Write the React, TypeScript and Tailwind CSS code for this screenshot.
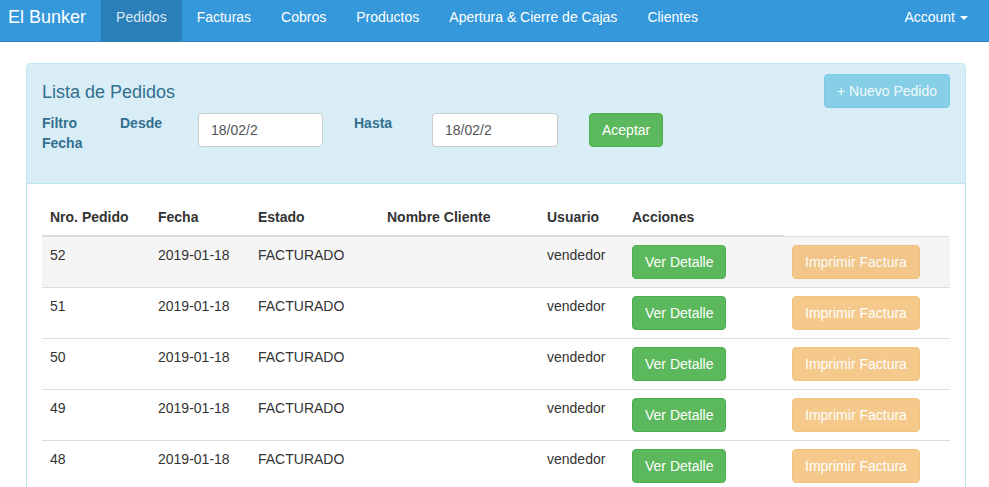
const navItems = [
  "Pedidos",
  "Facturas",
  "Cobros",
  "Productos",
  "Apertura & Cierre de Cajas",
  "Clientes",
];

const pedidos = [
  { id: 52, fecha: "2019-01-18", estado: "FACTURADO", usuario: "vendedor" },
  { id: 51, fecha: "2019-01-18", estado: "FACTURADO", usuario: "vendedor" },
  { id: 50, fecha: "2019-01-18", estado: "FACTURADO", usuario: "vendedor" },
  { id: 49, fecha: "2019-01-18", estado: "FACTURADO", usuario: "vendedor" },
  { id: 48, fecha: "2019-01-18", estado: "FACTURADO", usuario: "vendedor" },
];

const headers = [
  { label: "Nro. Pedido", w: "w-[108px]" },
  { label: "Fecha", w: "w-[100px]" },
  { label: "Estado", w: "w-[129px]" },
  { label: "Nombre Cliente", w: "w-[160px]" },
  { label: "Usuario", w: "w-[85px]" },
  { label: "Acciones", w: "w-[160px]" },
];

const Navbar = () => (
  <nav className="h-[42px] bg-[#3498db] border-b border-b-[#2c83bd] flex text-white">
    <div className="pl-[8px] pr-[15px] pt-[6px] text-[18px] leading-[22px]">El Bunker</div>
    <ul className="flex">
      {navItems.map((item, i) => (
        <li
          key={item}
          className={
            i === 0
              ? "px-[15px] pt-[7px] h-[41px] leading-[20px] text-[14px] bg-[#2b7fb8] text-[#dce8f5]"
              : "px-[15px] pt-[7px] h-[41px] leading-[20px] text-[14px]"
          }
        >
          {item}
        </li>
      ))}
    </ul>
    <div className="ml-auto mr-[6px] px-[15px] pt-[7px] leading-[20px] text-[14px] flex items-start">
      Account
      <span className="ml-[5px] mt-[9px] w-0 h-0 border-l-[4px] border-r-[4px] border-t-[4px] border-l-transparent border-r-transparent border-t-white"></span>
    </div>
  </nav>
);

const FilterLabel = ({ children, w }: { children: React.ReactNode; w: string }) => (
  <div className={`${w} font-bold text-[#31708f] leading-[20px]`}>{children}</div>
);

const App = () => {
  return (
    <div className="min-h-[487px] bg-white text-[14px] text-[#333]" style={{ fontFamily: '"Liberation Sans", Arial, sans-serif' }}>
      <Navbar />

      <div className="ml-[26px] mt-[21px] w-[940px] border border-[#bce8f1] rounded-t-[4px]">
        {/* panel heading */}
        <div className="h-[120px] bg-[#d9edf7] border-b border-b-[#bce8f1] px-[15px] pt-[10px] flex justify-between">
          <div>
            <h3 className="mt-[8px] text-[18px] leading-[20px] text-[#31708f]">Lista de Pedidos</h3>
            <div className="mt-[11px] flex items-start">
              <FilterLabel w="w-[78px]">
                Filtro
                <br />
                Fecha
              </FilterLabel>
              <FilterLabel w="w-[78px]">Desde</FilterLabel>
              <div className="w-[125px] h-[34px] bg-white border border-[#ccc] rounded-[4px] px-[12px] leading-[32px] text-[#555]">
                18/02/2
              </div>
              <div className="ml-[31px]">
                <FilterLabel w="w-[78px]">Hasta</FilterLabel>
              </div>
              <div className="w-[126px] h-[34px] bg-white border border-[#ccc] rounded-[4px] px-[12px] leading-[32px] text-[#555]">
                18/02/2
              </div>
              <button className="ml-[31px] h-[34px] px-[12px] bg-[#5cb85c] border border-[#4cae4c] rounded-[4px] text-white leading-[20px]">
                Aceptar
              </button>
            </div>
          </div>
          <button className="h-[34px] px-[12px] bg-[#5bc0de] border border-[#46b8da] rounded-[4px] text-white leading-[20px] opacity-65">
            + Nuevo Pedido
          </button>
        </div>

        {/* panel body */}
        <div className="p-[15px]">
          <table className="w-[908px] border-collapse">
            <thead>
              <tr>
                {headers.map((h) => (
                  <th
                    key={h.label}
                    className={`${h.w} text-left font-bold px-[8px] pt-[8px] pb-[8px] leading-[20px] border-b-2 border-b-[#ddd]`}
                  >
                    {h.label}
                  </th>
                ))}
              </tr>
            </thead>
            <tbody>
              {pedidos.map((p, i) => (
                <tr key={p.id} className={i === 0 ? "bg-[#f5f5f5]" : "bg-white"}>
                  <td className="px-[8px] pt-[8px] pb-[8px] align-top leading-[20px] border-t border-t-[#ddd]">{p.id}</td>
                  <td className="px-[8px] pt-[8px] pb-[8px] align-top leading-[20px] border-t border-t-[#ddd]">{p.fecha}</td>
                  <td className="px-[8px] pt-[8px] pb-[8px] align-top leading-[20px] border-t border-t-[#ddd]">{p.estado}</td>
                  <td className="px-[8px] pt-[8px] pb-[8px] align-top leading-[20px] border-t border-t-[#ddd]"></td>
                  <td className="px-[8px] pt-[8px] pb-[8px] align-top leading-[20px] border-t border-t-[#ddd]">{p.usuario}</td>
                  <td className="px-[8px] pt-[8px] pb-[8px] align-top border-t border-t-[#ddd]">
                    <button className="h-[34px] px-[12px] bg-[#5cb85c] border border-[#4cae4c] rounded-[4px] text-white leading-[20px]">
                      Ver Detalle
                    </button>
                  </td>
                  <td className="px-[8px] pt-[8px] pb-[8px] align-top border-t border-t-[#ddd]">
                    <button className="h-[34px] px-[12px] bg-[#f0ad4e] border border-[#eea236] rounded-[4px] text-white leading-[20px] opacity-65">
                      Imprimir Factura
                    </button>
                  </td>
                </tr>
              ))}
            </tbody>
          </table>
        </div>
      </div>
    </div>
  );
};

export default App;
